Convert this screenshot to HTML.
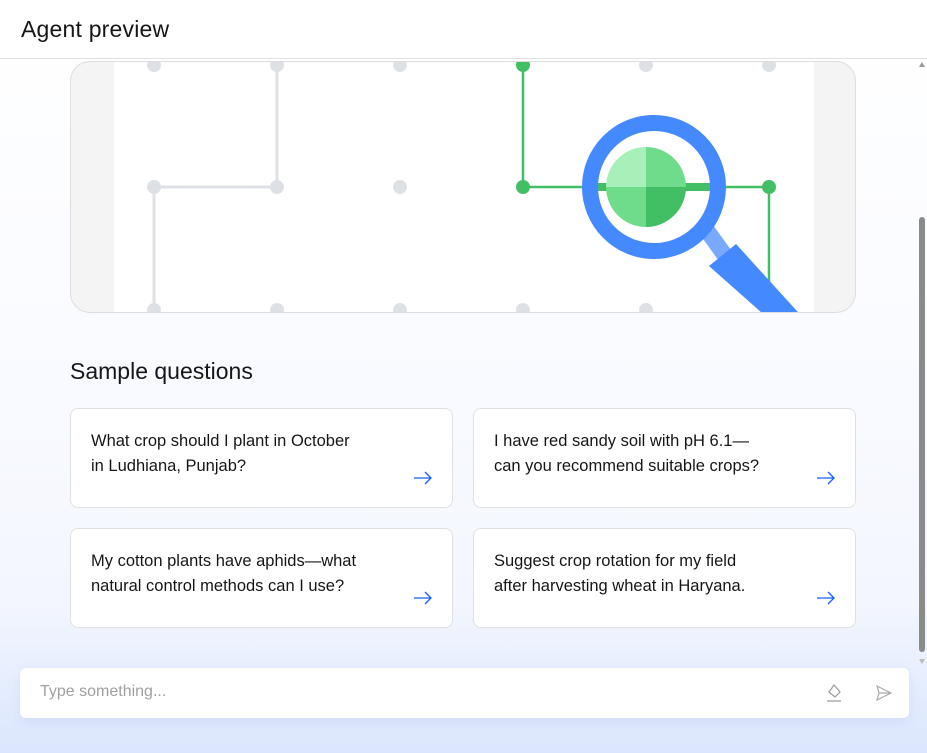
<!DOCTYPE html>
<html><head><style>
*{box-sizing:border-box;margin:0;padding:0}
body{width:927px;height:753px;overflow:hidden;font-family:"Liberation Sans",sans-serif;background:linear-gradient(#fff 0%,#f8faff 55%,#f3f6fe 80%,#dbe6fd 100%);position:relative;color:#161616}
.hdr{position:absolute;left:0;top:0;width:927px;height:59px;background:#fff;border-bottom:1px solid #e0e0e0}
.hdr h1{position:absolute;left:21px;top:16px;font-size:23px;font-weight:normal;letter-spacing:0.2px}
.img{position:absolute;left:70px;top:61px;width:786px;height:252px;border:1px solid #ddd;border-radius:20px;background:#f4f4f4;overflow:hidden}
h2{position:absolute;left:70px;top:358px;font-size:23px;font-weight:normal}
.card{position:absolute;width:383px;height:100px;background:#fff;border:1px solid #e0e0e0;border-radius:8px;padding:20px 20px 0 20px;font-size:16.5px;line-height:25px;white-space:nowrap}
.card svg{position:absolute;right:20px;bottom:22px}
.sb{position:absolute;left:917px;top:59px;width:10px;height:610px}
.inp{position:absolute;left:20px;top:668px;width:889px;height:50px;background:#fff;border-radius:6px;box-shadow:0 4px 12px rgba(120,150,230,.15)}
.inp span{position:absolute;left:20px;top:15px;font-size:16px;color:#a0a0a0}
</style></head><body>
<div class="hdr"><h1>Agent preview</h1></div>
<div class="img">
<svg width="786" height="252" viewBox="70 61 786 252" style="position:absolute;left:0;top:0">
<rect x="113" y="55" width="700" height="260" fill="#fff"/>
<g stroke="#dde0e5" stroke-width="3" fill="none">
<path d="M276 64V186H153V309"/>
</g>
<g fill="#dde0e5">
<circle cx="153" cy="64" r="7"/><circle cx="276" cy="64" r="7"/><circle cx="399" cy="64" r="7"/><circle cx="645" cy="64" r="7"/><circle cx="768" cy="64" r="7"/>
<circle cx="153" cy="186" r="7"/><circle cx="276" cy="186" r="7"/><circle cx="399" cy="186" r="7"/>
<circle cx="153" cy="309" r="7"/><circle cx="276" cy="309" r="7"/><circle cx="399" cy="309" r="7"/><circle cx="522" cy="309" r="7"/><circle cx="645" cy="309" r="7"/>
</g>
<g stroke="#42be65" stroke-width="2.5" fill="none"><path d="M522 64V186H768V312"/></g>
<rect x="595" y="182" width="120" height="8" fill="#42be65"/>
<circle cx="522" cy="64" r="7" fill="#42be65"/><circle cx="522" cy="186" r="7" fill="#42be65"/><circle cx="768" cy="186" r="7" fill="#42be65"/>
<path d="M700 235L725 270L738 260L712 224Z" fill="#78a9ff"/>
<path d="M708 265L770 320L805 320L735 243Z" fill="#4589ff"/>
<circle cx="653" cy="186" r="64" fill="none" stroke="#4589ff" stroke-width="16"/>
<path d="M645 186V146A40 40 0 0 0 605 186Z" fill="#a7f0ba"/>
<path d="M645 186V146A40 40 0 0 1 685 186Z" fill="#6fdc8c"/>
<path d="M645 186H605A40 40 0 0 0 645 226Z" fill="#6fdc8c"/>
<path d="M645 186H685A40 40 0 0 1 645 226Z" fill="#42be65"/>
</svg>
</div>
<h2>Sample questions</h2>
<div class="card" style="left:70px;top:408px">What crop should I plant in October<br>in Ludhiana, Punjab?<svg width="18" height="14" viewBox="0 0 18 14"><path d="M0 7H17M11 1L17 7L11 13" stroke="#0f62fe" stroke-width="1.3" fill="none"/></svg></div>
<div class="card" style="left:473px;top:408px">I have red sandy soil with pH 6.1—<br>can you recommend suitable crops?<svg width="18" height="14" viewBox="0 0 18 14"><path d="M0 7H17M11 1L17 7L11 13" stroke="#0f62fe" stroke-width="1.3" fill="none"/></svg></div>
<div class="card" style="left:70px;top:528px">My cotton plants have aphids—what<br>natural control methods can I use?<svg width="18" height="14" viewBox="0 0 18 14"><path d="M0 7H17M11 1L17 7L11 13" stroke="#0f62fe" stroke-width="1.3" fill="none"/></svg></div>
<div class="card" style="left:473px;top:528px">Suggest crop rotation for my field<br>after harvesting wheat in Haryana.<svg width="18" height="14" viewBox="0 0 18 14"><path d="M0 7H17M11 1L17 7L11 13" stroke="#0f62fe" stroke-width="1.3" fill="none"/></svg></div>
<div class="sb">
<svg width="10" height="610"><path d="M2 8L5 3L8 8Z" fill="#999"/><rect x="2" y="158" width="6" height="435" rx="3" fill="#8a8a8a"/><path d="M2 600L5 605L8 600Z" fill="#bbb"/></svg>
</div>
<div class="inp"><span>Type something...</span>
<svg style="position:absolute;left:803px;top:14px" width="22" height="22" viewBox="0 0 22 22"><path d="M11 3L17 10L12 15L6 10Z M6 10L12 15" stroke="#999" stroke-width="1.2" fill="none"/><path d="M4 19H18" stroke="#999" stroke-width="1.2"/></svg>
<svg style="position:absolute;left:854px;top:15px" width="20" height="20" viewBox="0 0 20 20"><path d="M3 3L17 10L3 17L5 10Z M5 10H17" stroke="#aaa" stroke-width="1.2" fill="none"/></svg>
</div>
</body></html>
